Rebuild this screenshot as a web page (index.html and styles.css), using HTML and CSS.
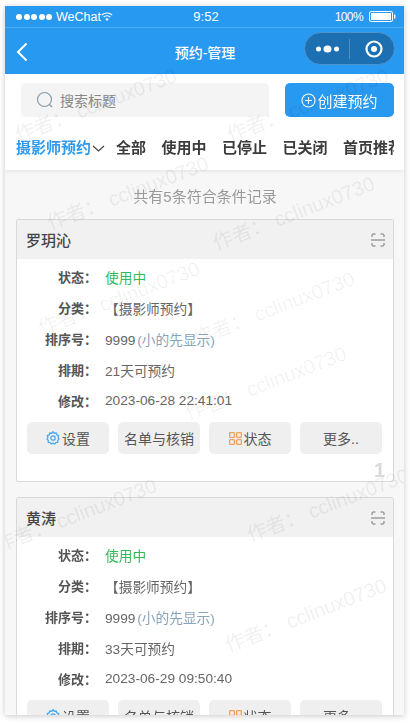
FILE: index.html
```html
<!DOCTYPE html>
<html lang="zh">
<head>
<meta charset="utf-8">
<title>预约-管理</title>
<link rel="stylesheet" href="styles.css">
</head>
<body>
<div class="phone">
  <div class="status">
    <div class="status-left">
      <span class="dots"><i></i><i></i><i></i><i></i><i></i></span>
      <span>WeChat</span>
      <svg class="wifi" width="12" height="10" viewBox="0 0 12 10"><path d="M.8 3.200a7.300 7.300 0 0 1 10.400 0M2.600 5.200a4.700 4.700 0 0 1 6.800 0" fill="none" stroke="#fff" stroke-width="1.200"/><path d="M4.300 7a2.400 2.400 0 0 1 3.400 0L6 9z" fill="#fff"/></svg>
    </div>
    <div class="status-time">9:52</div>
    <div class="status-right">
      <span class="pct">100%</span>
      <svg width="27" height="11" viewBox="0 0 27 11"><rect x=".5" y=".5" width="23" height="10" rx="1.500" fill="none" stroke="#fff"/><rect x="2" y="2" width="20" height="7" fill="#fff"/><rect x="25" y="3.500" width="1.400" height="4" fill="#fff"/></svg>
    </div>
  </div>
  <div class="nav">
    <svg class="back" width="12" height="20" viewBox="0 0 12 20"><path d="M10.500 1.500 2 10l8.500 8.500" fill="none" stroke="#fff" stroke-width="2"/></svg>
    <div class="nav-title">预约-管理</div>
    <div class="capsule">
      <svg width="23" height="8" viewBox="0 0 23 8"><circle cx="2.500" cy="4" r="2.500" fill="#fff"/><ellipse cx="11.500" cy="4" rx="4" ry="3.500" fill="#fff"/><circle cx="20.500" cy="4" r="2.500" fill="#fff"/></svg>
      <span class="capsule-line"></span>
      <svg width="18" height="18" viewBox="0 0 18 18"><circle cx="9" cy="9" r="7.500" fill="none" stroke="#fff" stroke-width="2.200"/><circle cx="9" cy="9" r="3" fill="#fff"/></svg>
    </div>
  </div>

  <div class="toolbar">
    <div class="search">
      <svg width="18" height="18" viewBox="0 0 18 18"><circle cx="8.500" cy="8.500" r="7" fill="none" stroke="#8a9ba8" stroke-width="1.200"/><path d="m13.500 13.500 2.500 2.500" stroke="#8a9ba8" stroke-width="1.200"/></svg>
      <span>搜索标题</span>
    </div>
    <div class="create">
      <svg width="15" height="15" viewBox="0 0 15 15"><circle cx="7.500" cy="7.500" r="6.500" fill="none" stroke="#fff" stroke-width="1.100"/><path d="M7.500 4v7M4 7.500h7" stroke="#fff" stroke-width="1.100"/></svg>
      <span>创建预约</span>
    </div>
  </div>

  <div class="tabs">
    <span class="tab tab-active">摄影师预约<svg width="13" height="7" viewBox="0 0 13 7"><path d="m1 1 5.500 5L12 1" fill="none" stroke="#444" stroke-width="1.200"/></svg></span>
    <span class="tab">全部</span>
    <span class="tab">使用中</span>
    <span class="tab">已停止</span>
    <span class="tab">已关闭</span>
    <span class="tab">首页推荐</span>
  </div>

  <div class="content">
    <div class="total">共有5条符合条件记录</div>

    <div class="card">
      <div class="card-head">
        <span>罗玥沁</span>
        <svg width="14" height="14" viewBox="0 0 14 14"><path d="M1 4V2a1 1 0 0 1 1-1h2.500M9.500 1H12a1 1 0 0 1 1 1v2M1 10v2a1 1 0 0 0 1 1h2.500M9.500 13H12a1 1 0 0 0 1-1v-2" fill="none" stroke="#777" stroke-width="1"/><path d="M0 7h14" stroke="#777"/></svg>
      </div>
      <div class="rows">
        <div class="row"><b>状态：</b><span class="green">使用中</span></div>
        <div class="row"><b>分类：</b><span>【摄影师预约】</span></div>
        <div class="row"><b>排序号：</b><span>9999 <em>(小的先显示)</em></span></div>
        <div class="row"><b>排期：</b><span>21天可预约</span></div>
        <div class="row"><b>修改：</b><span>2023-06-28 22:41:01</span></div>
      </div>
      <div class="actions">
        <div class="btn"><svg width="14" height="14" viewBox="0 0 14 14"><path d="M7 .8 8.300 2.300l2-.3.500 1.900 1.900.8-.6 1.900.9 1.400-1.300 1.400.1 1.900-1.900.3L8.700 13 7 12.200 5.300 13l-1.200-1.400-1.900-.3.100-1.900L1 8l.9-1.400-.6-1.900 1.900-.8.500-1.900 2 .3z" fill="none" stroke="#4aa8f5" stroke-width="1.300" stroke-linejoin="round"/><circle cx="7" cy="7" r="2.200" fill="none" stroke="#4aa8f5" stroke-width="1.300"/></svg>设置</div>
        <div class="btn">名单与核销</div>
        <div class="btn"><svg width="13" height="13" viewBox="0 0 13 13"><g fill="none" stroke="#f5a05a" stroke-width="1.300"><rect x=".6" y=".6" width="4.800" height="4.800" rx="1"/><rect x="7.600" y=".6" width="4.800" height="4.800" rx="1"/><rect x=".6" y="7.600" width="4.800" height="4.800" rx="1"/><rect x="7.600" y="7.600" width="4.800" height="4.800" rx="1"/></g></svg>状态</div>
        <div class="btn">更多..</div>
      </div>
      <div class="index">1</div>
    </div>

    <div class="card">
      <div class="card-head">
        <span>黄涛</span>
        <svg width="14" height="14" viewBox="0 0 14 14"><path d="M1 4V2a1 1 0 0 1 1-1h2.500M9.500 1H12a1 1 0 0 1 1 1v2M1 10v2a1 1 0 0 0 1 1h2.500M9.500 13H12a1 1 0 0 0 1-1v-2" fill="none" stroke="#777" stroke-width="1"/><path d="M0 7h14" stroke="#777"/></svg>
      </div>
      <div class="rows">
        <div class="row"><b>状态：</b><span class="green">使用中</span></div>
        <div class="row"><b>分类：</b><span>【摄影师预约】</span></div>
        <div class="row"><b>排序号：</b><span>9999 <em>(小的先显示)</em></span></div>
        <div class="row"><b>排期：</b><span>33天可预约</span></div>
        <div class="row"><b>修改：</b><span>2023-06-29 09:50:40</span></div>
      </div>
      <div class="actions">
        <div class="btn"><svg width="14" height="14" viewBox="0 0 14 14"><path d="M7 .8 8.300 2.300l2-.3.500 1.900 1.900.8-.6 1.900.9 1.400-1.300 1.400.1 1.900-1.900.3L8.700 13 7 12.200 5.300 13l-1.200-1.400-1.900-.3.100-1.900L1 8l.9-1.400-.6-1.900 1.900-.8.500-1.900 2 .3z" fill="none" stroke="#4aa8f5" stroke-width="1.300" stroke-linejoin="round"/><circle cx="7" cy="7" r="2.200" fill="none" stroke="#4aa8f5" stroke-width="1.300"/></svg>设置</div>
        <div class="btn">名单与核销</div>
        <div class="btn"><svg width="13" height="13" viewBox="0 0 13 13"><g fill="none" stroke="#f5a05a" stroke-width="1.300"><rect x=".6" y=".6" width="4.800" height="4.800" rx="1"/><rect x="7.600" y=".6" width="4.800" height="4.800" rx="1"/><rect x=".6" y="7.600" width="4.800" height="4.800" rx="1"/><rect x="7.600" y="7.600" width="4.800" height="4.800" rx="1"/></g></svg>状态</div>
        <div class="btn">更多..</div>
      </div>
    </div>
  </div>

  <div class="wm wm1">作者： cclinux0730</div>
  <div class="wm wm2">作者： cclinux0730</div>
  <div class="wm wm3">作者： cclinux0730</div>
  <div class="wm wm4">作者： cclinux0730</div>
  <div class="wm wm5">作者： cclinux0730</div>
  <div class="wm wm6">作者： cclinux0730</div>
  <div class="wm wm7">作者： cclinux0730</div>
  <div class="wm wm8">作者： cclinux0730</div>
  <div class="wm wm9">作者： cclinux0730</div>
  <div class="wm wm10">作者： cclinux0730</div>
</div>
</body>
</html>
```
FILE: styles.css
```css
* { box-sizing: border-box; }
html, body { margin: 0; height: 100%; background: #fff; overflow: hidden; }
body {
  padding: 6px 6px 8px 5px;
  font-family: "Liberation Sans", "Noto Sans CJK SC", sans-serif;
  color: #444;
}
.phone {
  position: relative;
  width: 399px;
  height: 709px;
  overflow: hidden;
  background: #f7f7f7;
  box-shadow: 0 1px 6px rgba(0, 0, 0, .22);
  filter: blur(.3px);
}
.status {
  height: 22px;
  background: #2799f1;
  border-bottom: 1px solid #4dabf4;
  color: #fff;
  font-size: 12.500px;
  display: grid;
  grid-template-columns: 1fr auto 1fr;
  align-items: center;
  padding: 0 8px 0 11px;
}
.status-left { display: flex; align-items: center; gap: 0; }
.dots { display: flex; gap: 1.500px; margin-right: 4px; }
.dots i { width: 6px; height: 6px; border-radius: 50%; background: #fff; }
.status-time { font-size: 13px; }
.status-right { display: flex; justify-content: flex-end; align-items: center; gap: 6px; }
.pct { font-size: 12px; letter-spacing: -.6px; }
.nav {
  height: 46px;
  background: #2799f1;
  display: grid;
  grid-template-columns: 1fr auto 1fr;
  align-items: center;
  padding: 0 9px 0 11px;
  color: #fff;
}
.back { margin-top: 1px; }
.nav-title {
  font-size: 14px;
  font-weight: 500;
  margin: 1px 0 0 -1px;
}
.capsule {
  justify-self: end;
  width: 91px;
  height: 33px;
  margin-top: -5px;
  border-radius: 17px;
  background: #1c70b2;
  border: 1px solid #4d94ce;
  display: flex;
  align-items: center;
  padding-left: 11px;
}
.capsule-line { width: 1px; height: 20px; background: #4d8fc4; margin: 0 15px 0 10px; }
.toolbar {
  height: 66px;
  background: #fff;
  display: flex;
  justify-content: space-between;
  padding: 9px 10px 0 16px;
}
.search {
  width: 248px;
  height: 34px;
  background: #f4f4f4;
  border-radius: 5px;
  display: flex;
  align-items: center;
  gap: 6px;
  padding-left: 15px;
  color: #888;
  font-size: 14px;
}
.create {
  width: 109px;
  height: 34px;
  background: #2799f1;
  border-radius: 5px;
  color: #fff;
  font-size: 15px;
  display: flex;
  align-items: center;
  justify-content: center;
  gap: 1px;
}
.tabs {
  height: 30px;
  background: #fff;
  box-shadow: 0 2px 3px rgba(0, 0, 0, .06);
  position: relative;
  display: flex;
  align-items: flex-start;
  gap: 15.500px;
  padding-left: 11px;
  overflow: hidden;
  white-space: nowrap;
  font-size: 15px;
  font-weight: 700;
  color: #3c3c3c;
}
.tab { flex: none; line-height: 16px; display: flex; align-items: center; }
.tab svg { margin-left: 1px; }
.tab-active { color: #2e9bf0; margin-right: -4.500px; }
.tab:last-child { width: 51px; overflow: hidden; }
.content { padding: 0 10px 0 11px; }
.total {
  height: 49px;
  text-align: center;
  font-size: 15px;
  color: #999;
  line-height: 54px;
}
.card {
  position: relative;
  height: 263px;
  margin-bottom: 15px;
  background: #fff;
  border: 1px solid #d9d9d9;
  border-radius: 2px;
}
.card-head {
  height: 39px;
  background: #f1f1f1;
  display: flex;
  align-items: center;
  justify-content: space-between;
  padding: 0 8px 0 9px;
  font-size: 15px;
  font-weight: 500;
  color: #444;
}
.rows { padding-top: 2px; font-size: 13.700px; }
.row { height: 31px; display: flex; align-items: center; color: #666; }
.row b {
  width: 80px;
  text-align: right;
  font-size: 13px;
  font-weight: 700;
  color: #555;
  margin-right: 8px;
  flex: none;
}
.row .green { color: #35b85a; }
.row em { font-style: normal; color: #88a4bb; margin-left: -2px; }
.actions {
  display: grid;
  grid-template-columns: repeat(4, 1fr);
  gap: 9px;
  padding: 6px 11px 0 10px;
}
.btn {
  height: 32px;
  background: #efefef;
  border-radius: 5px;
  font-size: 14px;
  color: #555;
  display: flex;
  align-items: center;
  justify-content: center;
  gap: 2px;
}
.index {
  position: absolute;
  right: 8px;
  bottom: -1px;
  font-size: 20px;
  font-weight: 700;
  color: #d9d9d9;
}
.wm {
  position: absolute;
  transform: rotate(-21deg);
  transform-origin: 0 100%;
  font-size: 20px;
  line-height: 24px;
  color: rgba(0, 0, 0, .06);
  white-space: nowrap;
  pointer-events: none;
}
.wm1 { left: 15px; top: 117px; }
.wm2 { left: 227px; top: 117px; }
.wm3 { left: 47px; top: 205px; }
.wm4 { left: 213px; top: 225px; }
.wm5 { left: 38px; top: 310px; }
.wm6 { left: 193px; top: 320px; }
.wm7 { left: 185px; top: 395px; }
.wm8 { left: -5px; top: 527px; }
.wm9 { left: 247px; top: 517px; }
.wm10 { left: 225px; top: 627px; }
```
